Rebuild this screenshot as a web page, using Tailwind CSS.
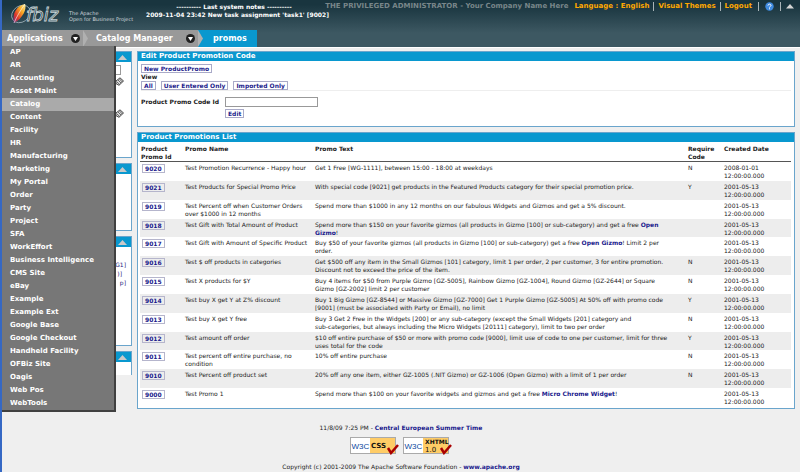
<!DOCTYPE html>
<html lang="en">
<head>
<meta charset="utf-8">
<title>OFBiz: Catalog Manager - Product Promotions</title>
<script src="https://cdn.jsdelivr.net/npm/@tailwindcss/browser@4"></script>
</head>
<body class="min-h-screen border-l-2 border-[#3568c4] bg-[#efefef] font-['DejaVu_Sans',Verdana,sans-serif] text-[6px] leading-[8px] text-[#222]">

<header class="relative flex h-[47px] flex-col justify-between bg-linear-to-b from-[#19353f] from-10% to-[#3d5862] to-70%">
  <div class="flex items-start justify-between pr-[6px]">
    <svg class="ml-2 h-[26px] w-[136px] shrink-0" viewBox="0 0 136 26" role="img" aria-label="OFBiz">
      <defs>
        <linearGradient id="feather" x1="0" y1="1" x2="1" y2="0">
          <stop offset="0" stop-color="#6a2d8c"/><stop offset=".3" stop-color="#e0352b"/><stop offset=".65" stop-color="#f7a823"/><stop offset="1" stop-color="#fff2a0"/>
        </linearGradient>
      </defs>
      <ellipse cx="11" cy="14" rx="10" ry="8" fill="none" stroke="#9fb0b8" stroke-width=".8" transform="rotate(-35 11 14)"/>
      <path d="M4 23C2 14 6 6 15 4C17 9 13 18 4 23Z" fill="url(#feather)"/>
      <path d="M4 23C7 16 10 11 15 4" fill="none" stroke="#fff" stroke-width=".6"/>
      <text x="16" y="21" font-family="DejaVu Sans" font-style="italic" font-size="18" fill="#1f3c46" stroke="#c9d4d8" stroke-width=".8">fbiz</text>
      <text x="59" y="15" font-family="DejaVu Sans" font-size="5" fill="#cfd8dc">The Apache</text>
      <text x="59" y="21" font-family="DejaVu Sans" font-size="5" fill="#cfd8dc">Open for Business Project</text>
    </svg>
    <div class="flex w-[176px] shrink-0 flex-col pt-[3px] text-center font-bold whitespace-nowrap text-white">
      <p>---------- Last system notes ----------</p>
      <p>2009-11-04 23:42 New task assignment 'task1' [9002]</p>
    </div>
    <nav class="ml-auto flex items-center pt-[2px] text-[7px] leading-[9px] font-bold whitespace-nowrap text-[#ffa800]" aria-label="User">
      <span class="mr-[6px] text-[#78868a]">THE PRIVILEGED ADMINISTRATOR - Your Company Name Here</span>
      <a href="#" class="border-r border-[#a9b4b8] pr-1">Language : English</a>
      <a href="#" class="border-r border-[#a9b4b8] px-1">Visual Themes</a>
      <a href="#" class="border-r border-[#a9b4b8] pr-[6px] pl-1">Logout</a>
      <a href="#" class="border-r border-[#a9b4b8] px-[6px]" aria-label="Help">
        <svg class="size-[9px]" viewBox="0 0 9 9"><circle cx="4.500" cy="4.500" r="4.200" fill="#3f8be0"/><path d="M3 3.600C3 1.700 6 1.800 6 3.500C6 4.500 4.500 4.400 4.500 5.500M4.500 6.300V7.300" fill="none" stroke="#fff"/></svg>
      </a>
      <a href="#" class="pl-[5px]" aria-label="Collapse header">
        <svg class="h-[9px] w-[8px]" viewBox="0 0 8 9"><path d="M0 6.500L4 2L8 6.500Z" fill="#d4d4d4"/></svg>
      </a>
    </nav>
  </div>

  <nav class="flex h-[17px] items-stretch text-[8px] leading-[17px] font-bold whitespace-nowrap text-white" aria-label="Breadcrumb">
    <button type="button" class="flex w-[81px] items-center justify-between bg-[#999] pr-[3px] pl-[5px]" aria-expanded="true">Applications
      <svg class="size-[9px]" viewBox="0 0 9 9"><circle cx="4.500" cy="4.500" r="4.500" fill="#222"/><path d="M2 3H7L4.500 7Z" fill="#fff"/></svg>
    </button>
    <svg class="h-[17px] w-[5px]" viewBox="0 0 5 17"><path d="M0 0H5V17H0Z" fill="#999"/><path d="M0 0L5 8.500L0 17Z" fill="#b0b0b0"/></svg>
    <button type="button" class="flex w-[110px] items-center justify-between bg-[#999] pr-[3px] pl-[8px]">Catalog Manager
      <svg class="size-[9px]" viewBox="0 0 9 9"><circle cx="4.500" cy="4.500" r="4.500" fill="#222"/><path d="M2 3H7L4.500 7Z" fill="#fff"/></svg>
    </button>
    <svg class="h-[17px] w-[5px]" viewBox="0 0 5 17"><path d="M0 0H5V17H0Z" fill="#0998cf"/><path d="M0 0L5 8.500L0 17Z" fill="#b0b0b0"/></svg>
    <a href="#" class="flex items-center bg-[#0998cf] px-[10px]">promos</a>
  </nav>

  <ul class="absolute top-[46px] left-0 z-10 w-[114px] border-r-2 border-b-2 border-[#404040] bg-[#777] text-[7px] leading-[13px] font-bold text-white">
    <li><a href="#" class="block pl-[8px]">AP</a></li>
    <li><a href="#" class="block pl-[8px]">AR</a></li>
    <li><a href="#" class="block pl-[8px]">Accounting</a></li>
    <li><a href="#" class="block pl-[8px]">Asset Maint</a></li>
    <li><a href="#" class="block bg-[#aaa] pl-[8px]">Catalog</a></li>
    <li><a href="#" class="block pl-[8px]">Content</a></li>
    <li><a href="#" class="block pl-[8px]">Facility</a></li>
    <li><a href="#" class="block pl-[8px]">HR</a></li>
    <li><a href="#" class="block pl-[8px]">Manufacturing</a></li>
    <li><a href="#" class="block pl-[8px]">Marketing</a></li>
    <li><a href="#" class="block pl-[8px]">My Portal</a></li>
    <li><a href="#" class="block pl-[8px]">Order</a></li>
    <li><a href="#" class="block pl-[8px]">Party</a></li>
    <li><a href="#" class="block pl-[8px]">Project</a></li>
    <li><a href="#" class="block pl-[8px]">SFA</a></li>
    <li><a href="#" class="block pl-[8px]">WorkEffort</a></li>
    <li><a href="#" class="block pl-[8px]">Business Intelligence</a></li>
    <li><a href="#" class="block pl-[8px]">CMS Site</a></li>
    <li><a href="#" class="block pl-[8px]">eBay</a></li>
    <li><a href="#" class="block pl-[8px]">Example</a></li>
    <li><a href="#" class="block pl-[8px]">Example Ext</a></li>
    <li><a href="#" class="block pl-[8px]">Google Base</a></li>
    <li><a href="#" class="block pl-[8px]">Google Checkout</a></li>
    <li><a href="#" class="block pl-[8px]">Handheld Facility</a></li>
    <li><a href="#" class="block pl-[8px]">OFBiz Site</a></li>
    <li><a href="#" class="block pl-[8px]">Oagis</a></li>
    <li><a href="#" class="block pl-[8px]">Web Pos</a></li>
    <li><a href="#" class="block pl-[8px]">WebTools</a></li>
  </ul>
</header>

<div class="flex items-start border-t border-white pt-[3px] pr-[5px]">
  <aside class="mr-[5px] flex w-[130px] shrink-0 flex-col gap-[5px] text-[#1a1a80]">
    <section class="h-[107px] border border-[#6aa5cc] bg-white">
      <div class="flex h-[10px] items-center justify-end bg-[#0998cf] pr-1"><svg class="h-[5px] w-[9px]" viewBox="0 0 9 5"><path d="M0 5L4.500 0L9 5Z" fill="#c9c9c9"/></svg></div>
      <div class="flex flex-col items-end gap-[23px] pt-[3px] pr-[7px]">
        <div class="flex flex-col items-end">
          <input type="text" aria-label="Product ID" class="mr-[3px] h-[10px] w-[70px] border border-[#999] bg-white">
          <svg class="mt-[2px] h-[9px] w-[9px]" viewBox="0 0 9 9"><path d="M1 4L5 .8L8.500 4L4 8.300L.8 6.500Z" fill="#ddd" stroke="#333" stroke-width=".9"/><path d="M3 3L6 6M4.500 2L7.300 5M2 5L4.500 7.300" stroke="#333" stroke-width=".7"/></svg>
        </div>
        <svg class="h-[9px] w-[9px]" viewBox="0 0 9 9"><path d="M1 4L5 .8L8.500 4L4 8.300L.8 6.500Z" fill="#ddd" stroke="#333" stroke-width=".9"/><path d="M3 3L6 6M4.500 2L7.300 5M2 5L4.500 7.300" stroke="#333" stroke-width=".7"/></svg>
      </div>
    </section>
    <section class="h-[68px] border border-[#6aa5cc] bg-white">
      <div class="flex h-[10px] items-center justify-end bg-[#0998cf] pr-1"><svg class="h-[5px] w-[9px]" viewBox="0 0 9 5"><path d="M0 5L4.500 0L9 5Z" fill="#c9c9c9"/></svg></div>
    </section>
    <section class="h-[110px] border border-[#6aa5cc] bg-white">
      <div class="flex h-[10px] items-center justify-end bg-[#0998cf] pr-1"><svg class="h-[5px] w-[9px]" viewBox="0 0 9 5"><path d="M0 5L4.500 0L9 5Z" fill="#c9c9c9"/></svg></div>
      <ul class="pt-[13px] pr-[5px] text-right leading-[9px]">
        <li>G1]</li>
        <li class="pr-1">)]</li>
        <li>p]</li>
      </ul>
    </section>
    <section class="h-[24px] border border-b-0 border-[#6aa5cc] bg-white">
      <div class="flex h-[10px] items-center justify-end bg-[#0998cf] pr-1"><svg class="h-[5px] w-[9px]" viewBox="0 0 9 5"><path d="M0 5L4.500 0L9 5Z" fill="#c9c9c9"/></svg></div>
    </section>
  </aside>

  <main class="flex min-w-0 flex-1 flex-col gap-[5px]">
    <section class="border border-[#6aa5cc] bg-white">
      <h1 class="bg-[#0998cf] pl-[3px] text-[7px] leading-[9px] font-bold text-white">Edit Product Promotion Code</h1>
      <div class="px-[3px] pt-[3px] pb-[8px] font-bold text-[#1c1c8c]">
        <a href="#" class="inline-block border border-[#a9aac8] px-[2px] leading-[7px]">New ProductPromo</a>
        <p class="text-[#222]">View</p>
        <div class="flex gap-[5px] border-b border-[#eee]">
          <a href="#" class="border border-[#a9aac8] px-[2px] leading-[7px]">All</a>
          <a href="#" class="border border-[#a9aac8] px-[2px] leading-[7px]">User Entered Only</a>
          <a href="#" class="border border-[#a9aac8] px-[2px] leading-[7px]">Imported Only</a>
        </div>
        <form class="grid grid-cols-[84px_1fr] items-center justify-items-start gap-y-[2px] pt-[6px]">
          <label for="promoCode" class="text-[#222]">Product Promo Code Id</label>
          <input id="promoCode" type="text" class="h-[10px] w-[93px] border border-[#999] bg-white px-[2px]">
          <button type="submit" class="col-start-2 border border-[#a9aac8] px-[2px] leading-[7px] font-bold">Edit</button>
        </form>
      </div>
    </section>

    <section class="border border-[#6aa5cc] bg-white">
      <h2 class="bg-[#0998cf] pl-[3px] text-[7px] leading-[9px] font-bold text-white">Product Promotions List</h2>
      <div class="pt-[3px] pr-[3px] pb-px pl-[2px]">
      <table class="h-[262px] w-full table-fixed text-left whitespace-nowrap [&_td]:pt-[2px] [&_td]:align-top [&_a]:font-bold [&_a]:text-[#1a1a8c]">
        <colgroup><col class="w-[45px]"><col class="w-[130px]"><col><col class="w-[36px]"><col class="w-[67px]"></colgroup>
        <thead class="border-b border-[#555] align-top">
          <tr><th class="pl-px">Product<br>Promo Id</th><th>Promo Name</th><th>Promo Text</th><th>Require<br>Code</th><th>Created Date</th></tr>
        </thead>
        <tbody class="[&>tr:nth-child(even)]:bg-[#ededed] [&_td:first-child]:pl-[2px] [&_td:first-child>a]:inline-block [&_td:first-child>a]:border [&_td:first-child>a]:border-[#b5b5cc] [&_td:first-child>a]:px-[2px] [&_td:first-child>a]:leading-[7px]">
          <tr><td><a href="#">9020</a></td><td>Test Promotion Recurrence - Happy hour</td><td>Get 1 Free [WG-1111], between 15:00 - 18:00 at weekdays</td><td>N</td><td>2008-01-01<br>12:00:00.000</td></tr>
          <tr><td><a href="#">9021</a></td><td>Test Products for Special Promo Price</td><td>With special code [9021] get products in the Featured Products category for their special promotion price.</td><td>Y</td><td>2001-05-13<br>12:00:00.000</td></tr>
          <tr><td><a href="#">9019</a></td><td>Test Percent off when Customer Orders<br>over $1000 in 12 months</td><td>Spend more than $1000 in any 12 months on our fabulous Widgets and Gizmos and get a 5% discount.</td><td></td><td>2001-05-13<br>12:00:00.000</td></tr>
          <tr><td><a href="#">9018</a></td><td>Test Gift with Total Amount of Product</td><td>Spend more than $150 on your favorite gizmos (all products in Gizmo [100] or sub-category) and get a free <a href="#">Open<br>Gizmo</a>!</td><td></td><td>2001-05-13<br>12:00:00.000</td></tr>
          <tr><td><a href="#">9017</a></td><td>Test Gift with Amount of Specific Product</td><td>Buy $50 of your favorite gizmos (all products in Gizmo [100] or sub-category) get a free <a href="#">Open Gizmo</a>! Limit 2 per<br>order.</td><td></td><td>2001-05-13<br>12:00:00.000</td></tr>
          <tr><td><a href="#">9016</a></td><td>Test $ off products in categories</td><td>Get $500 off any item in the Small Gizmos [101] category, limit 1 per order, 2 per customer, 3 for entire promotion.<br>Discount not to exceed the price of the item.</td><td>N</td><td>2001-05-13<br>12:00:00.000</td></tr>
          <tr><td><a href="#">9015</a></td><td>Test X products for $Y</td><td>Buy 4 items for $50 from Purple Gizmo [GZ-5005], Rainbow Gizmo [GZ-1004], Round Gizmo [GZ-2644] or Square<br>Gizmo [GZ-2002] limit 2 per customer</td><td>N</td><td>2001-05-13<br>12:00:00.000</td></tr>
          <tr><td><a href="#">9014</a></td><td>Test buy X get Y at Z% discount</td><td>Buy 1 Big Gizmo [GZ-8544] or Massive Gizmo [GZ-7000] Get 1 Purple Gizmo [GZ-5005] At 50% off with promo code<br>[9001] (must be associated with Party or Email), no limit</td><td>Y</td><td>2001-05-13<br>12:00:00.000</td></tr>
          <tr><td><a href="#">9013</a></td><td>Test buy X get Y free</td><td>Buy 3 Get 2 Free in the Widgets [200] or any sub-category (except the Small Widgets [201] category and<br>sub-categories, but always including the Micro Widgets [20111] category), limit to two per order</td><td>N</td><td>2001-05-13<br>12:00:00.000</td></tr>
          <tr><td><a href="#">9012</a></td><td>Test amount off order</td><td>$10 off entire purchase of $50 or more with promo code [9000], limit use of code to one per customer, limit for three<br>uses total for the code</td><td>Y</td><td>2001-05-13<br>12:00:00.000</td></tr>
          <tr><td><a href="#">9011</a></td><td>Test percent off entire purchase, no<br>condition</td><td>10% off entire purchase</td><td>N</td><td>2001-05-13<br>12:00:00.000</td></tr>
          <tr><td><a href="#">9010</a></td><td>Test Percent off product set</td><td>20% off any one item, either GZ-1005 (.NIT Gizmo) or GZ-1006 (Open Gizmo) with a limit of 1 per order</td><td>N</td><td>2001-05-13<br>12:00:00.000</td></tr>
          <tr><td><a href="#">9000</a></td><td>Test Promo 1</td><td>Spend more than $100 on your favorite widgets and gizmos and get a free <a href="#">Micro Chrome Widget</a>!</td><td></td><td>2001-05-13<br>12:00:00.000</td></tr>
        </tbody>
      </table>
      </div>
    </section>
  </main>
</div>

<footer class="mt-[3px] flex flex-col items-center pt-[12px] [&_a]:font-bold [&_a]:text-[#1a1a8c]">
  <p>11/8/09 7:25 PM - <a href="#">Central European Summer Time</a></p>
  <div class="flex gap-[4px] pt-[5px] pb-[8px]">
    <a href="#" aria-label="Valid CSS">
      <svg class="h-[18px] w-[49px]" viewBox="0 0 49 18"><rect x=".5" y=".5" width="45" height="16" fill="#fff" stroke="#aaa"/><rect x="20" y="1" width="25" height="15" fill="#fc6"/><text x="1.500" y="12" font-family="Liberation Sans" font-weight="400" font-size="8" fill="#0c479d">W3C</text><text x="21" y="11" font-family="DejaVu Sans" font-size="7" fill="#111">CSS</text><path d="M38 11L41 16L48 8" fill="none" stroke="#a00" stroke-width="2.500"/></svg>
    </a>
    <a href="#" aria-label="Valid XHTML 1.0">
      <svg class="h-[18px] w-[49px]" viewBox="0 0 49 18"><rect x=".5" y=".5" width="45" height="16" fill="#fff" stroke="#aaa"/><rect x="20" y="1" width="25" height="15" fill="#fc6"/><text x="1.500" y="12" font-family="Liberation Sans" font-weight="400" font-size="8" fill="#0c479d">W3C</text><text x="22" y="7" font-family="DejaVu Sans" font-size="6" fill="#111">XHTML</text><text x="22" y="15" font-family="DejaVu Sans" font-weight="400" font-size="7" fill="#111">1.0</text><path d="M38 11L41 16L48 8" fill="none" stroke="#a00" stroke-width="2.500"/></svg>
    </a>
  </div>
  <p>Copyright (c) 2001-2009 The Apache Software Foundation - <a href="#">www.apache.org</a></p>
</footer>
</body>
</html>
